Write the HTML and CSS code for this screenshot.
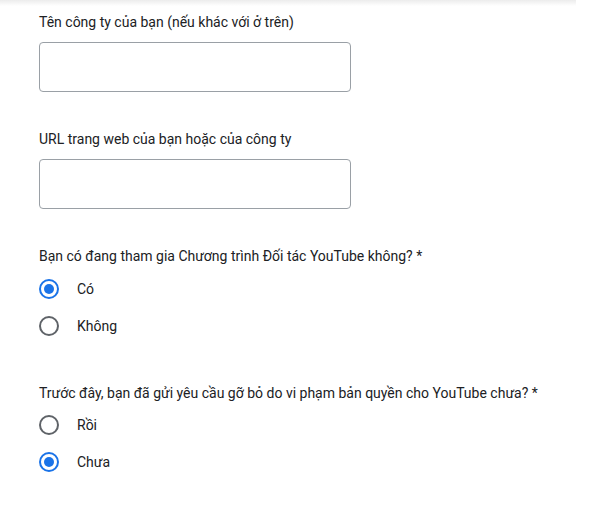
FILE: index.html
```html
<!DOCTYPE html>
<html lang="vi">
<head>
<meta charset="utf-8">
<title>Form</title>
<link rel="stylesheet" href="styles.css">
</head>
<body>
<div class="page">
  <div class="shade"></div>
  <div class="form">
    <div class="field">
      <div class="label">Tên công ty của bạn (nếu khác với ở trên)</div>
      <div class="input"></div>
    </div>
    <div class="field">
      <div class="label">URL trang web của bạn hoặc của công ty</div>
      <div class="input"></div>
    </div>
    <div class="field radios">
      <div class="label">Bạn có đang tham gia Chương trình Đối tác YouTube không? *</div>
      <div class="options">
        <div class="option"><span class="radio checked"></span><span class="opt-text">Có</span></div>
        <div class="option"><span class="radio"></span><span class="opt-text">Không</span></div>
      </div>
    </div>
    <div class="field radios last">
      <div class="label">Trước đây, bạn đã gửi yêu cầu gỡ bỏ do vi phạm bản quyền cho YouTube chưa? *</div>
      <div class="options">
        <div class="option"><span class="radio"></span><span class="opt-text">Rồi</span></div>
        <div class="option"><span class="radio checked"></span><span class="opt-text">Chưa</span></div>
      </div>
    </div>
  </div>
</div>
</body>
</html>
```

FILE: styles.css
```css
html, body {
  margin: 0;
  padding: 0;
  background: #ffffff;
}
body {
  font-family: Roboto, "Liberation Sans", Arial, sans-serif;
  color: #202124;
  font-size: 14px;
}
.page {
  width: 576px;
  height: 511px;
  background: #ffffff;
}
.shade {
  height: 6px;
  background: linear-gradient(to bottom, #ececec, #ffffff);
}
.form {
  padding: 6px 0 0 39px;
  display: flex;
  flex-direction: column;
}
.field {
  display: flex;
  flex-direction: column;
  margin-bottom: 37px;
}
.label {
  line-height: 20px;
  height: 20px;
  letter-spacing: 0;
}
.input {
  margin-top: 10px;
  width: 310px;
  height: 48px;
  border: 1px solid #9aa0a6;
  border-radius: 4px;
}
.options {
  display: flex;
  flex-direction: column;
  gap: 17px;
  margin-top: 13px;
}
.radios.last .options {
  margin-top: 12px;
}
.radios:nth-child(3) {
  margin-bottom: 47px;
}
.option {
  display: flex;
  align-items: center;
  height: 20px;
}
.radio {
  width: 16px;
  height: 16px;
  border: 2px solid #5f6368;
  border-radius: 50%;
  display: flex;
  align-items: center;
  justify-content: center;
  flex: none;
}
.radio.checked {
  border-color: #1a73e8;
}
.radio.checked::after {
  content: "";
  width: 10px;
  height: 10px;
  border-radius: 50%;
  background: #1a73e8;
}
.opt-text {
  margin-left: 18px;
  line-height: 20px;
}
```
